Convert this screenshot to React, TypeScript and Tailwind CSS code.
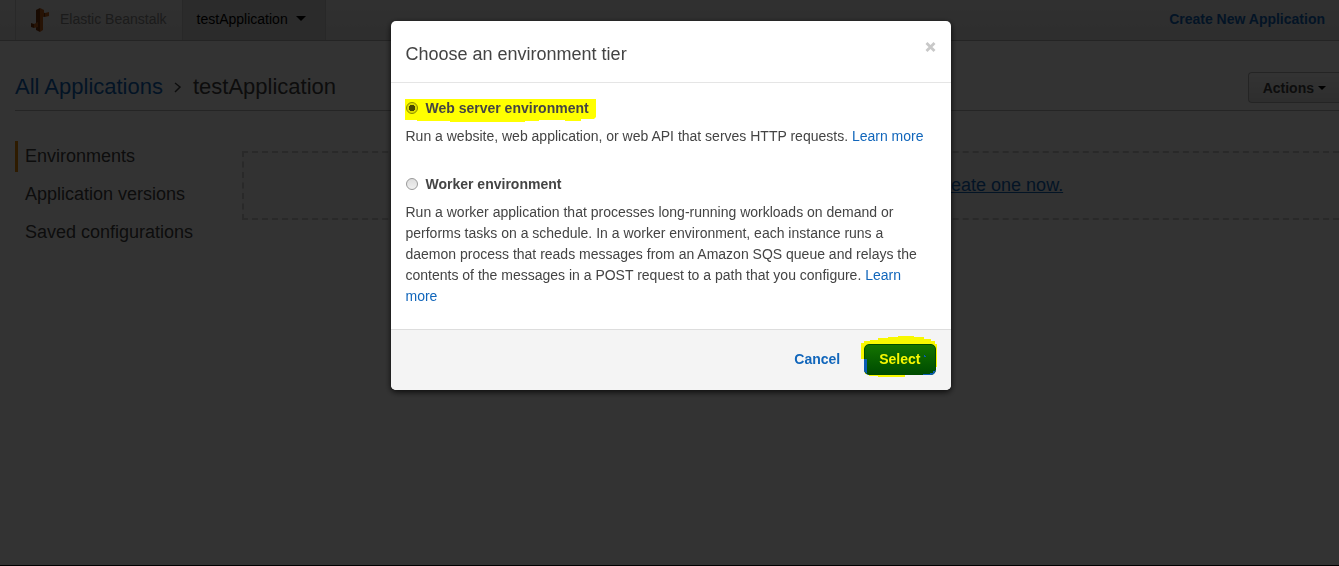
import React from "react";

function Caret({ className = "" }: { className?: string }) {
  return (
    <svg viewBox="0 0 8 4" preserveAspectRatio="none" className={className} aria-hidden="true">
      <path d="M0 0h8L4 4z" fill="currentColor" />
    </svg>
  );
}

function BeanstalkIcon() {
  return (
    <svg viewBox="0 0 18 24" className="h-6 w-[18px]" aria-hidden="true">
      <path d="M10 4l4 1v4l-4-1z" fill="#7a3608" />
      <path d="M14 5l4-1v4l-4 1z" fill="#c4621c" />
      <path d="M5 2l4-2v24l-4-2z" fill="#7a3608" />
      <path d="M9 0l4 2v6l-1 1v13l-3 2z" fill="#c4621c" />
      <path d="M0 15l3 1v4l-3-1z" fill="#7a3608" />
      <path d="M3 16l4-2v5l-4 1z" fill="#c4621c" />
    </svg>
  );
}

function TopBar() {
  return (
    <header className="flex h-[41px] items-stretch border-b border-[#b4b4b4] bg-linear-to-b from-[#f0f0f0] to-[#e3e3e3] pl-[15px] text-sm">
      <a href="#home" className="flex items-center gap-[11px] border-l border-[#cccccc] pr-[15px] pl-[15px] text-[#888888]">
        <BeanstalkIcon />
        <span className="pb-[3px]">Elastic Beanstalk</span>
      </a>
      <button type="button" className="flex items-center gap-2 border-x border-[#c8c8c8] bg-[#d4d4d4] pr-[19px] pl-[14px] pb-[3px] text-black">
        testApplication
        <Caret className="h-[5px] w-[10px]" />
      </button>
      <a href="#new" className="ml-auto flex items-center pr-[14px] pb-[3px] font-bold text-[#1166bb]">
        Create New Application
      </a>
    </header>
  );
}

function Page() {
  return (
    <div className="min-h-screen bg-white">
      <TopBar />
      <div className="ml-[15px] flex h-[70px] items-end justify-between border-b border-[#bbbbbb] pb-[7px]">
        <h1 className="flex items-center gap-[11px] pb-[2px] text-[22px] leading-7 text-[#444444]">
          <a href="#applications" className="text-[#1166bb]">All Applications</a>
          <svg viewBox="0 0 8 12" className="h-3 w-2" aria-hidden="true">
            <path d="M1 2l5 4-5 5" fill="none" stroke="#444444" strokeWidth="1.5" />
          </svg>
          <span>testApplication</span>
        </h1>
        <button type="button" className="flex h-[31px] items-center gap-1 rounded-l border border-r-0 border-[#b4b4b4] bg-linear-to-b from-white to-[#e4e4e4] pr-[13px] pl-[14px] text-sm font-bold text-[#444444]">
          Actions
          <Caret className="h-1 w-2 text-black" />
        </button>
      </div>
      <div className="flex pt-[30px] pl-[15px]">
        <nav className="flex w-[227px] shrink-0 flex-col gap-[7px] text-lg leading-[31px] text-[#444444]">
          <a href="#environments" className="border-l-3 border-[#e78900] pl-[7px]">Environments</a>
          <a href="#versions" className="border-l-3 border-transparent pl-[7px]">Application versions</a>
          <a href="#saved" className="border-l-3 border-transparent pl-[7px]">Saved configurations</a>
        </nav>
        <main className="mt-[10px] h-[69px] grow border-2 border-r-0 border-dashed border-[#cccccc] bg-[#f8f8f8] pt-[18px] text-center text-lg leading-7 text-[#444444]">
          No environments currently exist for this application.{" "}
          <a href="#create" className="text-[#1166bb] underline">Create one now.</a>
        </main>
      </div>
    </div>
  );
}

function Radio({ id, label, tone, checked = false }: { id: string; label: string; tone: string; checked?: boolean }) {
  return (
    <>
      <input
        id={id}
        type="radio"
        name="tier"
        defaultChecked={checked}
        className={`relative mb-0.5 size-3 shrink-0 appearance-none rounded-full border ${tone}`}
      />
      <label htmlFor={id} className="relative font-bold">{label}</label>
    </>
  );
}

function Dialog() {
  return (
    <section role="dialog" aria-modal="true" aria-labelledby="tier-title" className="w-[560px] max-w-full overflow-hidden rounded-[5px] bg-white text-sm leading-[21px] text-[#444444] shadow-[0_2px_6px_rgba(0,0,0,0.8)]">
      <header className="flex items-start justify-between border-b border-[#e5e5e5] px-[15px] pt-[18px] pb-[13px]">
        <h2 id="tier-title" className="text-lg leading-[30px]">Choose an environment tier</h2>
        <button type="button" aria-label="Close" className="text-[#c8c8c8]">
          <svg viewBox="0 0 11 11" className="h-4 w-[11px]" aria-hidden="true">
            <path d="M1.5 1.5l8 8M9.5 1.5l-8 8" stroke="currentColor" strokeWidth="2.8" />
          </svg>
        </button>
      </header>
      <form className="px-[15px] pt-[15px] pb-[22px]">
        <div className="relative flex h-[21px] w-fit items-center gap-2">
          <svg viewBox="0 0 192 24" className="absolute top-px -left-px h-6 w-48" aria-hidden="true">
            <path d="M0 0h191v18l-2 2h-13v2h-16v-1h-26v1h-14v1H45v-1H12v-1H0z" fill="#ffff00" />
          </svg>
          <Radio
            id="web"
            label="Web server environment"
            tone="border-[#8c8c00] bg-[radial-gradient(circle,#484800_0_3px,#dddd00_3px)]"
            checked
          />
        </div>
        <p className="mt-[7px]">
          Run a website, web application, or web API that serves HTTP requests.{" "}
          <a href="#web" className="text-[#1166bb]">Learn more</a>
        </p>
        <div className="mt-[27px] flex h-[21px] items-center gap-2">
          <Radio
            id="worker"
            label="Worker environment"
            tone="border-[#999999] bg-linear-to-b from-[#dddddd] to-[#f0f0f0]"
          />
        </div>
        <p className="mt-[7px]">
          Run a worker application that processes long-running workloads on demand or performs tasks on a schedule. In a worker environment, each instance runs a daemon process that reads messages from an Amazon SQS queue and relays the contents of the messages in a POST request to a path that you configure.{" "}
          <a href="#worker" className="text-[#1166bb]">Learn more</a>
        </p>
      </form>
      <footer className="flex items-center justify-end gap-6 border-t border-[#dddddd] bg-[#f4f4f4] pt-[14px] pr-[15px] pb-[15px] pl-4 font-bold">
        <button type="button" className="text-[#1166bb]">Cancel</button>
        <div className="relative">
          <svg viewBox="0 0 76 42" className="absolute -top-2 -left-[3px] h-[42px] w-[76px]" aria-hidden="true">
            <path d="M0 23V7h3V5h6V4h8V2h10V1h10V0h16v1h10v2h7v2h4v3h2v23h-2v4H60v2H52v2H44v2H17v-1H8v-2H4V23z" fill="#f8f800" />
          </svg>
          <button type="button" className="relative block h-[31px] rounded-[5px] border border-[#004c00] bg-linear-to-b from-[#147400] to-[#004c00] px-[14px] text-[#f8f800]">
            Select
          </button>
          <svg viewBox="0 0 72 31" className="pointer-events-none absolute top-0 left-0 h-[31px] w-[72px]" aria-hidden="true">
            <path d="M0 15h3v15l-3-3z" fill="#0a5cb4" />
            <path d="M59 31v-1h7v-1h3v-2h2v-1h1l-2 4-3 1z" fill="#0a5cb4" />
            <path d="M60 11h1v1h1v1h-2z" fill="#0a5cb4" />
          </svg>
        </div>
      </footer>
    </section>
  );
}

export default function App() {
  return (
    <div className="font-['Liberation_Sans',Arial,sans-serif]">
      <Page />
      <div className="fixed inset-0 flex items-start justify-center border-b border-black bg-black/80 pt-[21px] pl-0.5">
        <Dialog />
      </div>
    </div>
  );
}
